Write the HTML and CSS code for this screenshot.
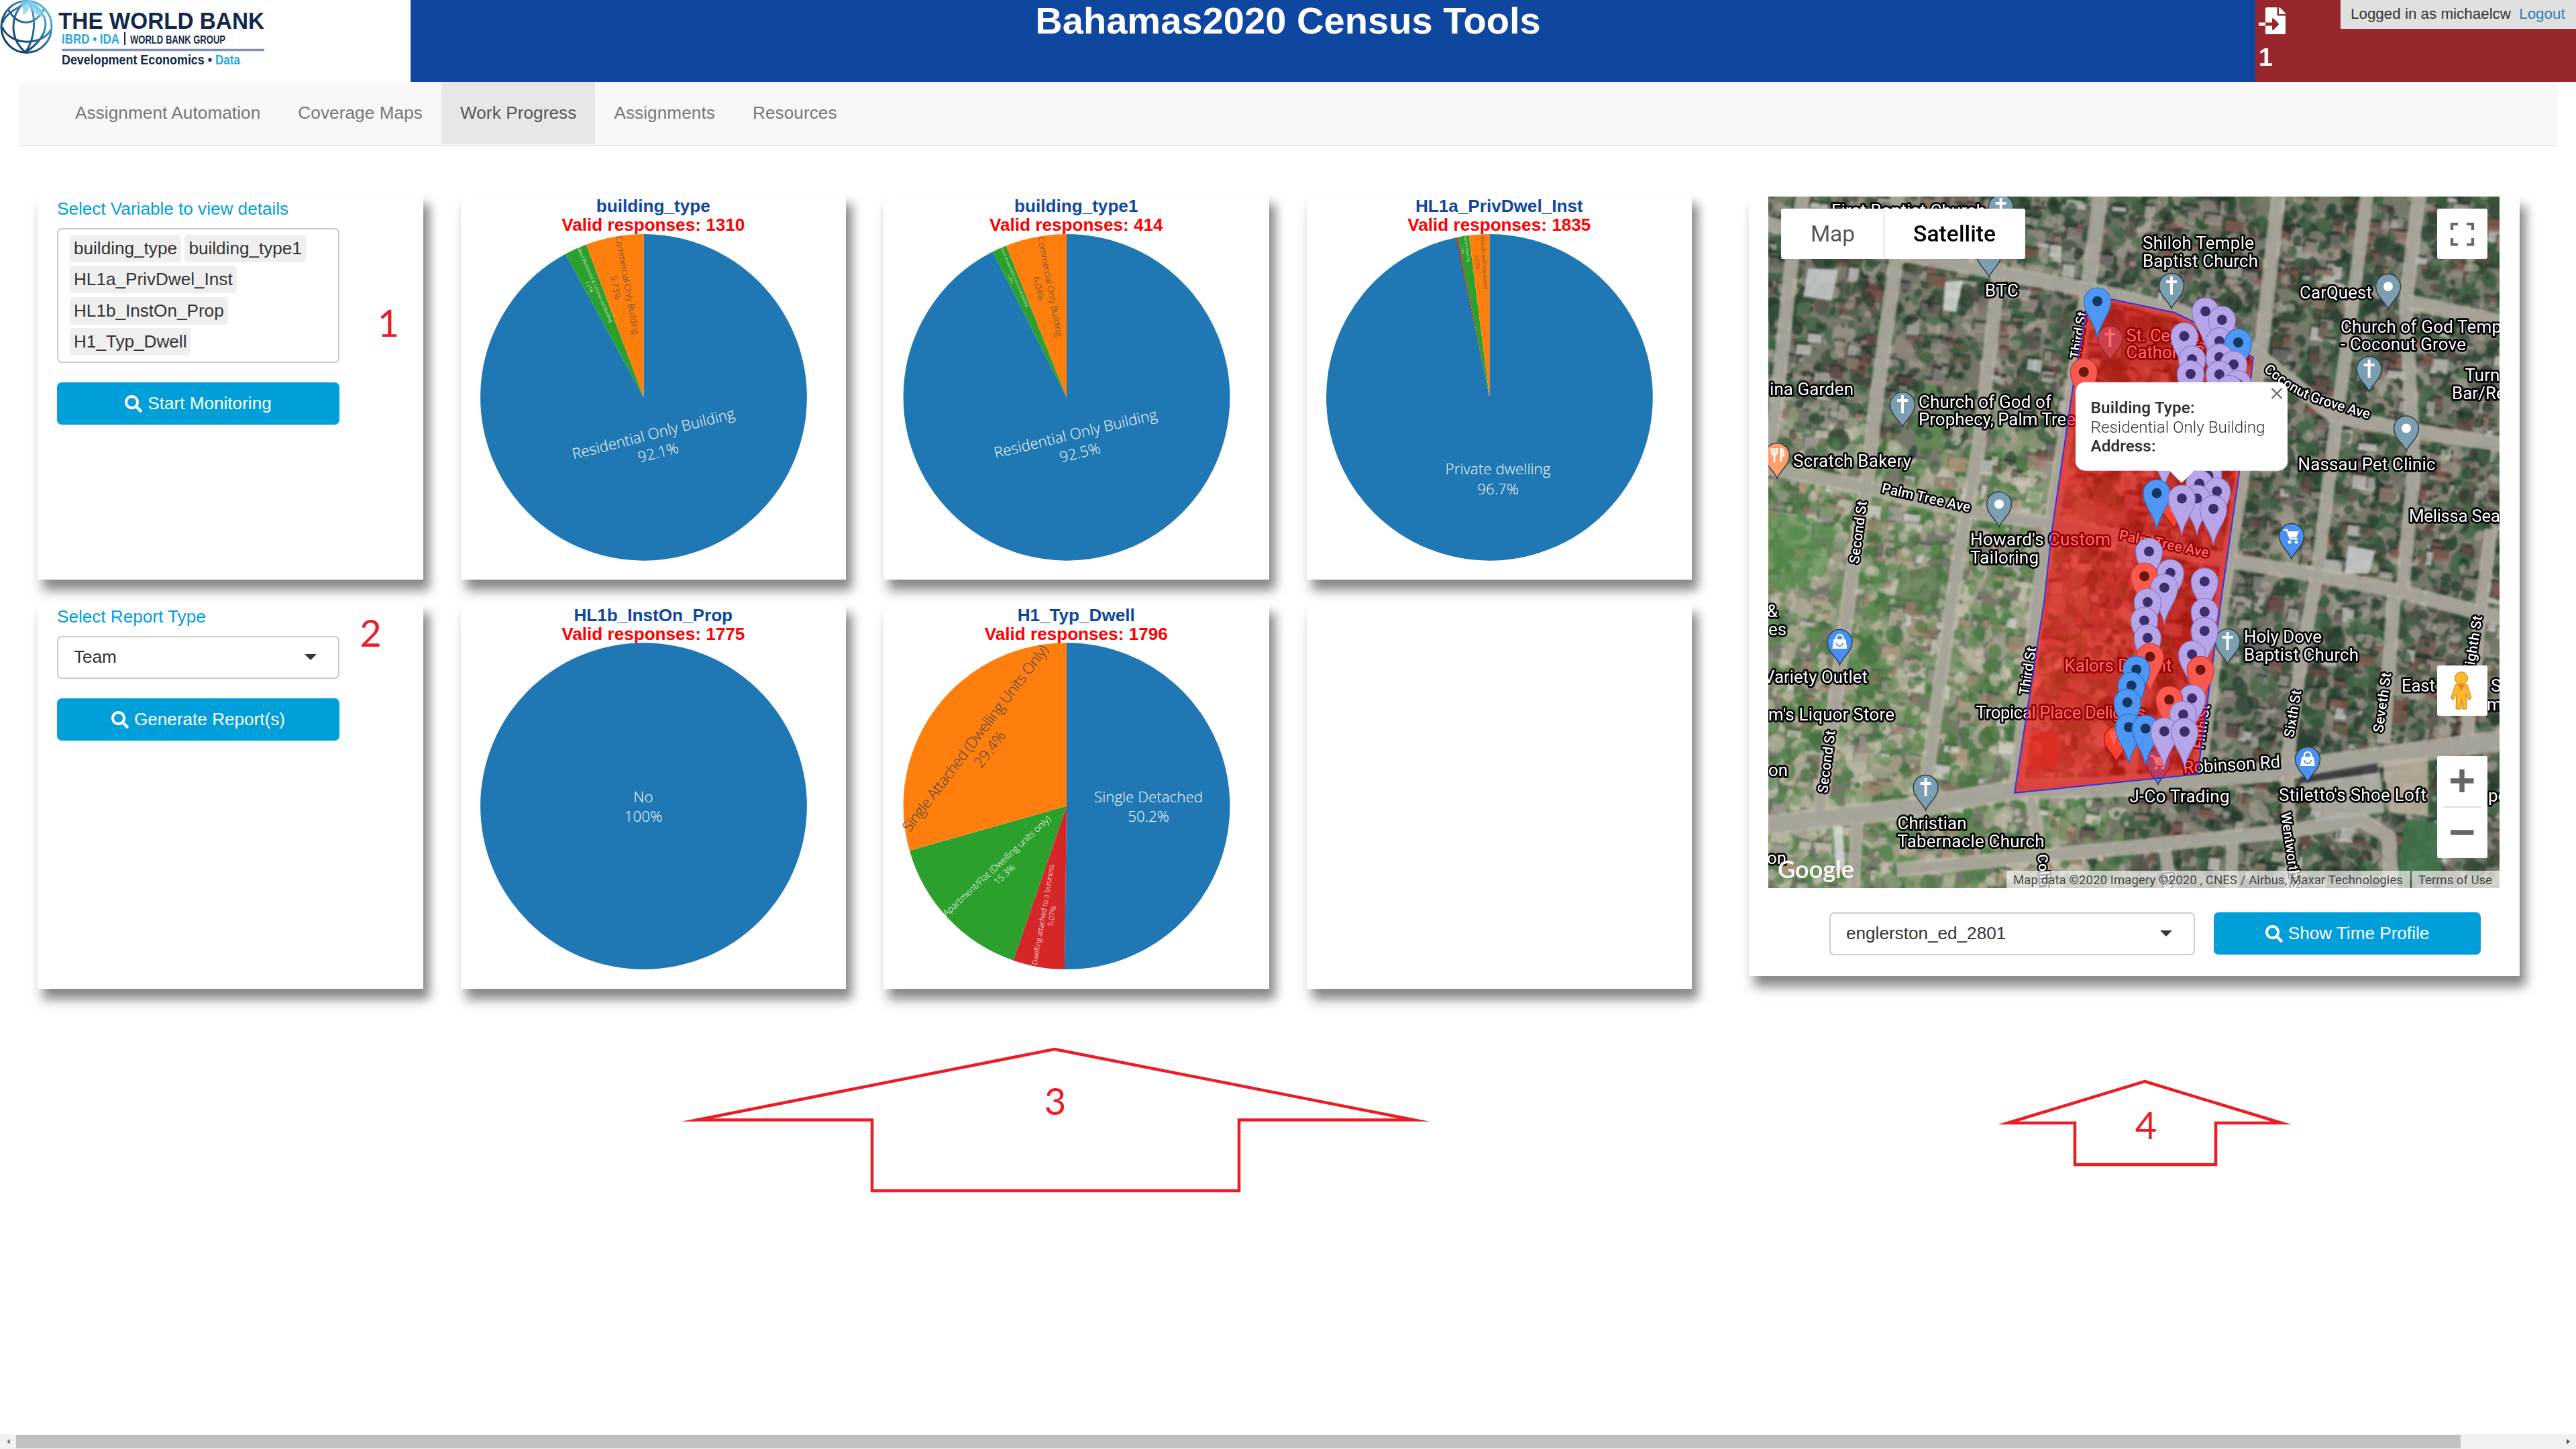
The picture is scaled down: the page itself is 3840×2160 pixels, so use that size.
FILE: index.html
```html
<!DOCTYPE html>
<html lang="en">
<head>
<meta charset="utf-8">
<title>Bahamas2020 Census Tools</title>
<link rel="stylesheet" href="styles.css">
</head>
<body>
<svg class="defs" width="0" height="0">
  <defs>
    <symbol id="search" viewBox="0 0 512 512"><path fill="#fff" d="M505 442.700L405.300 343c-4.500-4.500-10.600-7-17-7H372c27.600-35.300 44-79.700 44-128C416 93.100 322.900 0 208 0S0 93.100 0 208s93.100 208 208 208c48.300 0 92.700-16.400 128-44v16.300c0 6.400 2.500 12.500 7 17l99.700 99.700c9.400 9.400 24.600 9.400 33.900 0l28.300-28.300c9.400-9.400 9.400-24.600.1-34zM208 336c-70.700 0-128-57.200-128-128 0-70.700 57.200-128 128-128 70.700 0 128 57.200 128 128 0 70.700-57.200 128-128 128z"/></symbol>
    <g id="drop"><path class="drop" d="M0 34C-3 24-18.500 15-18.500 0A18.500 18.500 0 1 1 18.500 0C18.500 15 3 24 0 34Z"/></g>
    <g id="cross"><use href="#drop"/><path d="M0-14V13M-8-6H8" stroke="#fff" stroke-width="4" fill="none"/></g>
    <g id="dot"><use href="#drop"/><circle r="7" fill="#fff"/></g>
    <g id="cart"><use href="#drop"/><path d="M-12-9h5l5 13h11" fill="none" stroke="#fff" stroke-width="2.500"/><path d="M-7-7H11L7 2H-3z" fill="#fff"/><circle cx="-3" cy="9" r="2.500" fill="#fff"/><circle cx="7" cy="9" r="2.500" fill="#fff"/></g>
    <g id="bag"><use href="#drop"/><path d="M-9-4H9L11 10H-11z" fill="#fff"/><path d="M-5-3v-3a5 5 0 0 1 10 0v3" fill="none" stroke="#fff" stroke-width="2.500"/><path d="M-5 1a5 5 0 0 0 10 0" fill="none" stroke="#4a90f0" stroke-width="2"/></g>
    <g id="fork"><use href="#drop"/><path d="M-8-11v6a4 4 0 0 0 8 0v-6M-4-11V10M6 10V-10c3 0 4 4 4 10H6" fill="none" stroke="#fff" stroke-width="2.800"/></g>
    <g id="mark"><path class="mark" d="M0 55C-3 32-20 20-20 0A20 20 0 1 1 20 0C20 20 3 32 0 55Z"/><circle class="eye" r="7.500"/></g>
    <linearGradient id="globe" x1="0" y1="1" x2="1" y2="0"><stop offset="0" stop-color="#0b2a50"/><stop offset=".45" stop-color="#1c5f8c"/><stop offset="1" stop-color="#6cc8f2"/></linearGradient>
  </defs>
</svg>

<header class="top">
  <svg class="logo" width="612" height="122" viewBox="0 0 612 122">
    <g fill="none" stroke="url(#globe)" stroke-width="3">
      <ellipse cx="39.500" cy="40" rx="37.500" ry="38.500"/>
      <path d="M38 2C14 22 14 58 38 78M42 2C56 24 52 58 38 78M42 4C80 22 74 54 38 78M40 4C20 14 6 24 4 34M3 40C16 70 64 68 76 44M12 14C28 42 54 38 66 12"/>
    </g>
    <path d="M30 4Q42-4 54 6Q66 18 66 26Q52 24 44 10Q40 20 34 22Q36 12 30 4Z" fill="#7fd0f4" opacity=".8"/>
    <g class="brand">
      <text x="87" y="43" font-size="35" textLength="307" lengthAdjust="spacingAndGlyphs">THE WORLD BANK</text>
      <text class="sky" x="92" y="64.500" font-size="20" textLength="86" lengthAdjust="spacingAndGlyphs">IBRD • IDA</text>
      <path d="M186 48V67" stroke="#12284c" stroke-width="2"/>
      <text x="194" y="64.500" font-size="17" textLength="142" lengthAdjust="spacingAndGlyphs">WORLD BANK GROUP</text>
      <path d="M92 74.500H394" stroke="#8491ab" stroke-width="3.500"/>
      <text x="92" y="96" font-size="20" textLength="224" lengthAdjust="spacingAndGlyphs">Development Economics •</text>
      <text class="sky" x="321" y="96" font-size="20" textLength="37" lengthAdjust="spacingAndGlyphs">Data</text>
    </g>
  </svg>
  <h1>Bahamas2020 Census Tools</h1>
  <div class="status">
    <div class="pending">
      <svg width="40" height="40" viewBox="0 0 512 512"><path fill="#fff" d="M16 288c-8.800 0-16 7.200-16 16v32c0 8.800 7.200 16 16 16h112v-64zm489-183L407.100 7c-4.500-4.500-10.600-7-17-7H384v128h128v-6.100c0-6.300-2.500-12.400-7-16.900zM352 136V0H152c-13.300 0-24 10.700-24 24v264h128v-65.200c0-14.300 17.300-21.400 27.400-11.300L379 308c6.600 6.700 6.600 17.400 0 24l-95.700 96.400c-10.100 10.100-27.400 3-27.400-11.300V352H128v136c0 13.300 10.700 24 24 24h336c13.300 0 24-10.700 24-24V160H376c-13.200 0-24-10.800-24-24z"/></svg>
      <b>1</b>
    </div>
    <div class="login">Logged in as michaelcw <a>Logout</a></div>
  </div>
</header>

<nav class="nav">
  <a>Assignment Automation</a><a>Coverage Maps</a><a class="on">Work Progress</a><a>Assignments</a><a>Resources</a>
</nav>

<main class="main">
  <div class="cards">
    <section class="card form">
      <label>Select Variable to view details</label>
      <div class="tags"><span>building_type</span><span>building_type1</span><span>HL1a_PrivDwel_Inst</span><span>HL1b_InstOn_Prop</span><span>H1_Typ_Dwell</span></div>
      <button class="btn"><svg><use href="#search"/></svg>Start Monitoring</button>
    </section>

    <section class="card">
      <h2>building_type<em>Valid responses: 1310</em></h2>
      <svg class="pie" viewBox="0 0 574 574">
        <g class="slices" transform="translate(272.500 303.300) rotate(-90)">
          <circle class="blue" r="121.700" pathLength="100" stroke-dasharray="92.060 100"/>
          <circle class="green" r="121.700" pathLength="100" stroke-dasharray="2.210 100" stroke-dashoffset="-92.060"/>
          <circle class="orange" r="121.700" pathLength="100" stroke-dasharray="5.730 100" stroke-dashoffset="-94.270"/>
        </g>
        <g transform="translate(289 365) rotate(-14.300)" font-size="22.400"><text textLength="249">Residential Only Building</text><text y="29">92.1%</text></g>
        <g class="dark" transform="translate(243.500 137) rotate(79.700)" font-size="13.400"><text textLength="149">Commercial Only Building</text><text y="17.500">5.73%</text></g>
        <g transform="translate(197.500 136) rotate(66.300)" font-size="6.600"><text textLength="122">Mixed (Residential &amp; Commercial) Building</text><text y="8.600">2.21%</text></g>
      </svg>
    </section>

    <section class="card">
      <h2>building_type1<em>Valid responses: 414</em></h2>
      <svg class="pie" viewBox="0 0 574 574">
        <g class="slices" transform="translate(273 303.300) rotate(-90)">
          <circle class="blue" r="121.700" pathLength="100" stroke-dasharray="92.510 100"/>
          <circle class="green" r="121.700" pathLength="100" stroke-dasharray="1.450 100" stroke-dashoffset="-92.510"/>
          <circle class="orange" r="121.700" pathLength="100" stroke-dasharray="6.040 100" stroke-dashoffset="-93.960"/>
        </g>
        <g transform="translate(288 365) rotate(-13.500)" font-size="22.400"><text textLength="249">Residential Only Building</text><text y="29">92.5%</text></g>
        <g class="dark" transform="translate(244 139.400) rotate(79.200)" font-size="13.600"><text textLength="151">Commercial Only Building</text><text y="17.700">6.04%</text></g>
        <g transform="translate(193.500 124.800) rotate(66.400)" font-size="5.200"><text textLength="96">Mixed (Residential &amp; Commercial) Building</text><text y="6.800">1.45%</text></g>
      </svg>
    </section>

    <section class="card">
      <h2>HL1a_PrivDwel_Inst<em>Valid responses: 1835</em></h2>
      <svg class="pie" viewBox="0 0 574 574">
        <g class="slices" transform="translate(272.400 303.300) rotate(-90)">
          <circle class="blue" r="121.700" pathLength="100" stroke-dasharray="96.730 100"/>
          <circle class="red" r="121.700" pathLength="100" stroke-dasharray=".150 100" stroke-dashoffset="-96.700"/>
          <circle class="green" r="121.700" pathLength="100" stroke-dasharray="1.140 100" stroke-dashoffset="-96.840"/>
          <circle class="orange" r="121.700" pathLength="100" stroke-dasharray="2.020 100" stroke-dashoffset="-97.980"/>
        </g>
        <g transform="translate(285 418)" font-size="22.400"><text textLength="157">Private dwelling</text><text y="29.500">96.7%</text></g>
        <g class="dark" transform="translate(261.500 101.600) rotate(86.400)" font-size="8"><text textLength="81">Abandoned/Dilapidated</text><text y="10">2.02%</text></g>
        <g transform="translate(237 81.800) rotate(82.600)" font-size="5.400"><text textLength="39">Vacant dwelling</text><text y="7">1.14%</text></g>
      </svg>
    </section>

    <section class="card form second">
      <label>Select Report Type</label>
      <div class="select">Team</div>
      <button class="btn"><svg><use href="#search"/></svg>Generate Report(s)</button>
    </section>

    <section class="card">
      <h2>HL1b_InstOn_Prop<em>Valid responses: 1775</em></h2>
      <svg class="pie" viewBox="0 0 574 574">
        <circle cx="272.500" cy="302.600" r="243.400" fill="#1f77b4"/>
        <g transform="translate(272 297)" font-size="22.400"><text>No</text><text y="29">100%</text></g>
      </svg>
    </section>

    <section class="card">
      <h2>H1_Typ_Dwell<em>Valid responses: 1796</em></h2>
      <svg class="pie" viewBox="0 0 574 574">
        <g class="slices" transform="translate(273 302.600) rotate(-90)">
          <circle class="blue" r="121.700" pathLength="100" stroke-dasharray="50.200 100"/>
          <circle class="red" r="121.700" pathLength="100" stroke-dasharray="5.100 100" stroke-dashoffset="-50.200"/>
          <circle class="green" r="121.700" pathLength="100" stroke-dasharray="15.300 100" stroke-dashoffset="-55.300"/>
          <circle class="orange" r="121.700" pathLength="100" stroke-dasharray="29.400 100" stroke-dashoffset="-70.600"/>
        </g>
        <g transform="translate(395 297)" font-size="22.400"><text textLength="162">Single Detached</text><text y="29">50.2%</text></g>
        <g class="dark" transform="translate(143 206) rotate(-52.700)" font-size="22.400"><text textLength="343">Single Attached (Dwelling Units Only)</text><text y="27">29.4%</text></g>
        <g transform="translate(172 395.500) rotate(-42.800)" font-size="13.700"><text textLength="213">Apartment/Flat (Dwelling units only)</text><text y="17">15.3%</text></g>
        <g transform="translate(241.500 465) rotate(-80.300)" font-size="11"><text textLength="152">Dwelling attached to a business</text><text y="13.500">5.07%</text></g>
      </svg>
    </section>

    <section class="card"></section>
  </div>

  <section class="card mapcard">
    <div class="map">
      <canvas id="ground" width="1090" height="1031"></canvas>
      <svg class="layer" width="1090" height="1031" viewBox="0 0 1090 1031">
        <g class="poi">
          <use href="#cross" x="346.700" y="16"/><use href="#dot" x="329" y="86"/><use href="#cross" x="200" y="310"/>
          <use href="#fork" x="13" y="386" class="food"/><use href="#dot" x="344" y="458.500"/><use href="#cross" x="509.400" y="211"/>
          <use href="#cross" x="601" y="133"/><use href="#dot" x="924" y="134"/><use href="#cross" x="895.600" y="257"/><use href="#dot" x="951" y="345.600"/>
          <use href="#cart" x="780" y="506" class="shop"/><use href="#bag" x="106.400" y="664" class="shop"/><use href="#cross" x="234.600" y="881"/>
          <use href="#cross" x="684.600" y="663"/><use href="#bag" x="804" y="839" class="shop"/><use href="#cart" x="581" y="842.500" class="shop"/>
          <use href="#fork" x="519" y="808" class="food"/><use href="#fork" x="604.600" y="461" class="food"/>
        </g>
        <g class="names">
          <text x="94" y="30" textLength="230">First Baptist Church</text>
          <text x="323" y="148.500" textLength="50">BTC</text>
          <text x="558" y="78" textLength="166">Shiloh Temple</text><text x="558" y="105" textLength="172">Baptist Church</text>
          <text x="792" y="151.500" textLength="108">CarQuest</text>
          <text x="853" y="203" textLength="240">Church of God Temp</text><text x="853" y="229" textLength="187">- Coconut Grove</text>
          <text x="1038.500" y="275">Turn</text><text x="1019" y="301.500">Bar/Re</text>
          <text x="789.500" y="408" textLength="205">Nassau Pet Clinic</text><text x="955" y="485" textLength="136">Melissa Sea</text>
          <text x="2" y="296" textLength="125">ina Garden</text>
          <text x="224" y="314.600" textLength="198">Church of God of</text><text x="224" y="341" textLength="234">Prophecy, Palm Tree</text>
          <text x="37" y="402.600" textLength="176">Scratch Bakery</text>
          <text x="301" y="520" textLength="209">Howard's Custom</text><text x="301" y="547" textLength="102">Tailoring</text>
          <text x="-2" y="627">&amp;</text><text x="0" y="654">es</text>
          <text x="-7" y="725.400" textLength="155">Variety Outlet</text><text x="0" y="780.500" textLength="188">m's Liquor Store</text>
          <text x="0" y="864">on</text><text x="-2" y="995">on</text>
          <text x="309.600" y="778.400" textLength="253">Tropical Place Delights</text><text x="441.600" y="708" textLength="160">Kalors Delight</text>
          <text x="192.500" y="942.500" textLength="103">Christian</text><text x="192.500" y="970" textLength="219">Tabernacle Church</text>
          <text x="538.500" y="902.500" textLength="149">J-Co Trading</text>
          <text transform="translate(619 860) rotate(-3.500)" textLength="145">Robinson Rd</text>
          <text x="761" y="901" textLength="220">Stiletto's Shoe Loft</text>
          <text x="709" y="665" textLength="116">Holy Dove</text><text x="709" y="691.500" textLength="171">Baptist Church</text>
          <text x="533.600" y="215.500" textLength="125">St. Cecilia's</text><text x="533.600" y="241" textLength="182">Catholic Church</text>
          <text x="944" y="738" textLength="50">East</text><text x="1077" y="738">S</text><text x="1071" y="766">ma</text><text x="1073" y="902">pe</text>
        </g>
        <g class="streets">
          <path id="cga" d="M738 259Q780 296 820 309T900 333" fill="none" stroke="none"/>
          <text><textPath href="#cga" textLength="175">Coconut Grove Ave</textPath></text>
          <text transform="translate(168 441) rotate(12.600)" textLength="135">Palm Tree Ave</text>
          <text transform="translate(135 548) rotate(-82.700)" textLength="94">Second St</text>
          <text transform="translate(464 243) rotate(-81)" textLength="71">Third St</text>
          <text transform="translate(388 744) rotate(-81)" textLength="72">Third St</text>
          <text transform="translate(522 511) rotate(11.500)" textLength="136">Palm Tree Ave</text>
          <text transform="translate(88 890) rotate(-82.700)" textLength="94">Second St</text>
          <text transform="translate(401 981) rotate(84)">Collins Ave</text>
          <text transform="translate(783 807) rotate(-80.500)" textLength="71">Sixth St</text>
          <text transform="translate(916 800) rotate(-82)" textLength="90">Seveth St</text>
          <text transform="translate(1051 711) rotate(-81)" textLength="86">Eighth St</text>
          <text transform="translate(649 824) rotate(-82)" textLength="66">Fifth St</text>
          <text transform="translate(764 919) rotate(82)" textLength="122">Wentworth St</text>
          <text transform="translate(588 1009) rotate(84)">Ea</text>
        </g>
        <path class="zone" d="M478 146L507 152L606 173L649 194L723 240L702 412L677 587L640 861L514 874L367 889L411 604L423 496L455 278Z"/>
        <g class="marks">
          <use href="#mark" x="490.600" y="156" class="b"/><use href="#mark" x="651.600" y="171"/><use href="#mark" x="676.400" y="183.700"/>
          <use href="#mark" x="620" y="208"/><use href="#mark" x="672.400" y="215.500"/><use href="#mark" x="700.500" y="217.400" class="b"/>
          <use href="#mark" x="672.400" y="239.600"/><use href="#mark" x="631.600" y="242.600"/><use href="#mark" x="693.600" y="250.300"/>
          <use href="#mark" x="470.300" y="261.400" class="r"/><use href="#mark" x="629.500" y="264.500"/><use href="#mark" x="672.400" y="265"/>
          <use href="#mark" x="699.700" y="279"/><use href="#mark" x="687.500" y="286.600"/>
          <use href="#mark" x="590" y="380"/><use href="#mark" x="660" y="385"/><use href="#mark" x="656" y="416"/><use href="#mark" x="642.600" y="428"/>
          <use href="#mark" x="668.700" y="439.400"/><use href="#mark" x="579" y="442" class="b"/><use href="#mark" x="639" y="450"/><use href="#mark" x="616.400" y="450"/>
          <use href="#mark" x="663.400" y="465.400"/><use href="#mark" x="567.500" y="529"/><use href="#mark" x="599.300" y="561"/><use href="#mark" x="560.500" y="566" class="r"/>
          <use href="#mark" x="650.300" y="573.700"/><use href="#mark" x="590.300" y="583"/><use href="#mark" x="565.400" y="604.500"/><use href="#mark" x="650.300" y="619"/>
          <use href="#mark" x="560.500" y="632"/><use href="#mark" x="650.300" y="647.400"/><use href="#mark" x="565.400" y="658"/><use href="#mark" x="631.600" y="682.500"/>
          <use href="#mark" x="569" y="686" class="r"/><use href="#mark" x="548.700" y="705" class="b"/><use href="#mark" x="644.200" y="705.400" class="r"/>
          <use href="#mark" x="541.300" y="729" class="b"/><use href="#mark" x="631.600" y="748"/><use href="#mark" x="597.700" y="750" class="r"/>
          <use href="#mark" x="535.200" y="754" class="b"/><use href="#mark" x="618.500" y="772"/><use href="#mark" x="537.300" y="791" class="b"/>
          <use href="#mark" x="562.200" y="793" class="b"/><use href="#mark" x="590.300" y="797"/><use href="#mark" x="620.500" y="797.600"/>
        </g>
        <g class="popup">
          <path d="M472 276.700H760a14 14 0 0 1 14 14V394.700a14 14 0 0 1-14 14H635L616 427L598 408.700H472a14 14 0 0 1-14-14V290.700a14 14 0 0 1 14-14Z" fill="#fff"/>
          <text x="480.500" y="322.600" class="strong" textLength="155">Building Type:</text>
          <text x="480.500" y="351.700" textLength="260">Residential Only Building</text>
          <text x="480.500" y="380.400" class="strong" textLength="97">Address:</text>
          <path d="M750.500 286l15 15m0-15l-15 15" stroke="#666" stroke-width="2.200"/>
        </g>
        <g class="controls">
          <rect x="19" y="18" width="364" height="75" rx="3"/><path d="M172.500 18V93" stroke="#e6e6e6" stroke-width="2"/>
          <text x="63" y="66.600" fill="#565656" textLength="66">Map</text><text x="216" y="66.600" class="strong" textLength="123">Satellite</text>
          <rect x="997" y="18" width="75" height="75" rx="3"/>
          <path d="M1019 50V41H1028M1041 41H1050V50M1050 62V71.500H1041M1028 71.500H1019V62" fill="none" stroke="#666" stroke-width="4.200"/>
          <rect x="997" y="699" width="75" height="75" rx="3"/>
          <g fill="#fbb929" stroke="#b9812a" stroke-width="1"><path d="M1024 728Q1033 724 1042 728L1048 748L1044 750L1040 741L1041 764H1034.500L1033.500 749L1032 764H1025L1026 741L1021 750L1017.500 748Z"/><circle cx="1033" cy="718" r="9.500"/></g>
          <path d="M1028 728H1038L1033 737Z" fill="#e8802c"/>
          <rect x="997" y="834" width="75" height="152" rx="3"/>
          <path d="M1006 910H1062" stroke="#e0e0e0" stroke-width="2"/>
          <path d="M1017 871H1051.500M1034 854V888M1017 948H1051.500" stroke="#666" stroke-width="7.500"/>
        </g>
        <text class="google" x="14" y="1016" textLength="114" lengthAdjust="spacingAndGlyphs">Google</text>
        <g class="legal">
          <path d="M355 1005H957V1031H355ZM959 1005H1090V1031H959Z" fill="#f5f5f5" opacity=".7"/>
          <text x="365" y="1025" textLength="581">Map data ©2020 Imagery ©2020 , CNES / Airbus, Maxar Technologies</text><text x="969" y="1025" textLength="110">Terms of Use</text>
        </g>
      </svg>
    </div>
    <div class="mapbar">
      <div class="select">englerston_ed_2801</div>
      <button class="btn"><svg><use href="#search"/></svg>Show Time Profile</button>
    </div>
  </section>
</main>

<svg class="notes" width="3840" height="2160" viewBox="0 0 3840 2160">
  <path d="M1572 1564L2108 1669.500H1847V1775H1300V1669.500H1039ZM3197 1612L3401 1674H3303V1736H3093V1674H2993Z"/>
  <text x="579" y="502">1</text><text x="552.500" y="964">2</text><text x="1573" y="1662">3</text><text x="3199" y="1698">4</text>
</svg>

<div class="scroll"><i></i><span></span><i class="r"></i></div>
<script src="ground.js"></script>
</body>
</html>
```
FILE: styles.css
```css
* { box-sizing: border-box; }
body { margin: 0; width: 3840px; height: 2160px; overflow: hidden; position: relative; background: #fff; color: #333; font: 26.130px/37.300px "Liberation Sans", Arial, sans-serif; display: flex; flex-direction: column; }
.defs { position: absolute; }
.top { display: flex; height: 122px; flex: none; background: #0f47a0; }
.logo { background: #fff; flex: none; }
.brand { font-weight: bold; fill: #12284c; }
.brand .sky { fill: #2ca6df; }
.top h1 { margin: 0; width: 2616px; flex: none; text-align: center; color: #fff; font-size: 56px; line-height: 61.600px; letter-spacing: .06px; }
.status { flex: 1; margin-left: 134px; display: flex; justify-content: space-between; align-items: flex-start; background: #98262c; }
.pending { display: flex; flex-direction: column; padding: 11px 0 0 5px; color: #fff; font-size: 37.300px; line-height: 40px; }
.pending svg { margin-bottom: 14px; }
.login { width: 351px; height: 43px; padding-left: 15px; background: #e0e0e0; font-size: 22.400px; line-height: 42px; white-space: nowrap; }
.login a { color: #337ab7; margin-left: 6px; }
.nav { flex: none; display: flex; height: 96px; margin: 0 28px; padding-left: 56px; background: #f8f8f8; border-bottom: 2px solid #e7e7e7; }
.nav a { height: 93px; padding: 0 28px; line-height: 92px; color: #777; letter-spacing: .09px; }
.nav .on { background: #e7e7e7; color: #555; }
.main { display: flex; gap: 85px; align-items: flex-start; padding: 71px 0 0 56px; }
.cards { display: grid; grid-template-columns: repeat(4, 574.500px); grid-template-rows: 575px 575px; gap: 35px 56px; }
.card { background: #fff; display: grid; box-shadow: 9px 15px 15px #888, 0 20px 22px rgba(0, 0, 0, .07); }
.card h2 { grid-area: 1 / 1; z-index: 1; margin: 0; padding-top: 4px; text-align: center; color: #0f47a0; font-size: 26.130px; line-height: 28px; }
.card h2 em { display: block; font-style: normal; color: #f00; }
.pie { grid-area: 1 / 1; width: 574px; height: 574px; }
.pie text { text-anchor: middle; font-family: "Open Sans", sans-serif; font-weight: 300; fill: #fff; }
.pie .dark text { fill: #444; }
.slices circle { fill: none; stroke-width: 243.400px; }
.blue { stroke: #1f77b4; }
.green { stroke: #2ca02c; }
.orange { stroke: #ff7f0e; }
.red { stroke: #d62728; }
.form { display: flex; flex-direction: column; padding: 1px 125px 0 29px; }
.form label { color: #009fda; line-height: 37px; height: 50px; padding-top: 3px; }
.second { padding-top: 0; }
.second label { padding-top: 2px; }
.form .select { margin-top: -1px; }
.form .tags { width: 421px; height: 201px; border: 2px solid #ccc; border-radius: 7px; padding: 8px 17px; display: flex; flex-wrap: wrap; align-content: flex-start; gap: 5.400px; }
.tags span { background: #efefef; border-radius: 5px; padding: 0 6px; line-height: 41px; height: 41px; }
.btn { width: 421px; height: 63px; margin-top: 29px; border: 0; border-radius: 7px; padding: 0; display: flex; align-items: center; justify-content: center; gap: 8px; background: #009fda; color: #fff; font: inherit; }
.btn svg { width: 26px; height: 26px; }
.select { width: 421px; height: 64px; border: 2px solid #ccc; border-radius: 7px; padding: 0 32px 1px 23px; line-height: 59px; display: flex; justify-content: space-between; align-items: center; }
.select::after { content: ""; border: 9.500px solid transparent; border-top-color: #333; border-bottom: 0; }
.mapcard { width: 1149px; height: 1163px; margin-top: 3px; display: flex; flex-direction: column; padding: 1px 30px 0 29px; }
.map { position: relative; width: 1090px; height: 1031px; overflow: hidden; }
.map canvas { display: block; filter: blur(1.600px); transform: scale(1.008); }
.layer { position: absolute; left: 0; top: 0; overflow: hidden; font-family: Roboto, sans-serif; }
.drop { fill: var(--c, #7b9eb0); stroke: #2f3f48; stroke-width: 1.500px; }
.food { --c: #ff9e67; }
.shop { --c: #4a90f0; }
.names text, .streets text { fill: #fff; stroke: #000; stroke-width: 5.500px; stroke-linejoin: round; paint-order: stroke; font-size: 26px; }
.streets text { font-size: 21px; font-weight: 500; stroke-width: 5px; }
.zone { fill: #f00; fill-opacity: .58; stroke: #3a30e0; stroke-width: 2px; }
.mark { fill: var(--c, #b7a5ea); stroke: var(--s, #8a78c4); stroke-width: 1.200px; }
.eye { fill: var(--e, #3d2d6b); }
.b { --c: #4e97f5; --s: #2c6cc0; --e: #14375f; }
.r { --c: #f9594f; --s: #c93a33; --e: #6b1410; }
.popup text { font-size: 24.300px; font-weight: 300; fill: #333; }
.popup .strong { font-weight: 600; }
.controls rect { fill: #fff; }
.controls text { font-size: 33.600px; }
.controls .strong { font-weight: 500; }
.google { font: 600 36px Lato, sans-serif; fill: #fff; }
.legal text { font-size: 18.700px; fill: #444; }
.mapbar { display: flex; gap: 28px; padding: 36px 0 0 91px; }
.mapbar .select { width: 545px; }
.mapbar .btn { width: 398px; margin-top: 0; }
.notes { position: absolute; left: 0; top: 0; z-index: 2; }
.notes path { fill: none; stroke: #ed1c24; stroke-width: 4.500px; stroke-miterlimit: 20; }
.notes text { fill: #ed1c24; font: 56px Lato, sans-serif; text-anchor: middle; }
.scroll { margin-top: auto; height: 22px; flex: none; background: #f1f1f1; display: flex; align-items: center; }
.scroll span { width: 3644px; height: 20px; background: #c1c1c1; margin-right: auto; }
.scroll i { width: 24px; height: 20px; display: grid; place-items: center; }
.scroll i::after { content: ""; border: 4px solid transparent; border-right: 5px solid #808080; border-left: 0; }
.scroll .r::after { border: 4px solid transparent; border-left: 5px solid #505050; border-right: 0; }
```
FILE: ground.js
```js
// Aerial ground layer: vegetation, roofs and roads.
const canvas = document.getElementById('ground');
const ctx = canvas.getContext('2d', { willReadFrequently: true });
let seed = 7;
const rnd = () => (seed = (seed * 16807) % 2147483647) / 2147483647;
const pick = a => a[Math.floor(rnd() * a.length)];
const W = 1090, H = 1031;

ctx.fillStyle = '#76796a';
ctx.fillRect(0, 0, W, H);

// The south-west quarter is brighter than the rest; the edge is ragged.
const isLight = (x, y) => x + rnd() * 120 < 560 && y + rnd() * 140 > 420;

for (let i = 0; i < 5200; i++) {
  const x = rnd() * W, y = rnd() * H, r = 4 + rnd() * 15;
  ctx.fillStyle = isLight(x, y)
    ? pick(['#5d8a52', '#4f7d48', '#8d9a78', '#a8a68e', '#c2bea9', '#44703f', '#8a9d7c', '#b5b39d'])
    : pick(['#2a4230', '#365a3b', '#2a3f30', '#77746a', '#8c877a', '#446848', '#a09a8c', '#55534a']);
  ctx.globalAlpha = .75;
  ctx.beginPath();
  ctx.ellipse(x, y, r, r * (.5 + rnd() * .5), rnd() * 3, 0, 7);
  ctx.fill();
}
for (let i = 0; i < 1150; i++) {
  const x = rnd() * W, y = rnd() * H, w = 7 + rnd() * 22, h = 6 + rnd() * 17;
  const light = isLight(x, y);
  ctx.save();
  ctx.translate(x, y);
  ctx.rotate(.12 + (rnd() - .5) * .1);
  ctx.globalAlpha = light ? .3 : .6;
  ctx.fillStyle = '#1f2824';
  ctx.fillRect(-2, -4, w, h);
  ctx.globalAlpha = .75;
  ctx.fillStyle = light
    ? pick(['#b8ae9f', '#a98b76', '#cfcabb', '#8d7866', '#e0ded6', '#a39f94', '#b99a80'])
    : pick(['#a39a8e', '#7d6359', '#bab4aa', '#6c5049', '#d2d0ca', '#8f8a84', '#9c8474', '#8a5d52', '#77726d']);
  ctx.fillRect(0, 0, w, h);
  ctx.restore();
}
// Tree crowns over the roofs.
for (let i = 0; i < 2600; i++) {
  const x = rnd() * W, y = rnd() * H, r = 3 + rnd() * 8;
  ctx.globalAlpha = .6;
  ctx.fillStyle = isLight(x, y) ? pick(['#5a8650', '#7c9a6a', '#c9c5b2', '#456f40']) : pick(['#294530', '#33553a', '#1f3326', '#a8a396', '#4b6d4c']);
  ctx.beginPath();
  ctx.ellipse(x, y, r, r * .8, rnd() * 3, 0, 7);
  ctx.fill();
}

const roads = [
  [17, [0,44, 209,90, 469,140, 514,150, 616,175, 680,200, 734,243, 840,328, 950,350, 1090,370]],
  [15, [56,0, 40,90, 14,331, 0,400]],
  [16, [196,0, 194,94, 163,312, 151,419, 128,561, 90,853, 79,918]],
  [15, [347,102, 316,370, 285,542, 266,669, 239,861]],
  [17, [496,0, 477,140, 454,293, 423,484, 404,587, 370,885]],
  [16, [759,0, 734,224, 698,465, 677,587, 653,771, 640,861]],
  [14, [890,0, 861,217, 840,370, 816,561, 792,689, 771,845, 779,1031]],
  [15, [967,0, 947,159, 959,408, 942,587, 930,591, 914,812]],
  [14, [1073,496, 1061,591, 1036,812]],
  [17, [947,159, 1090,190]],
  [17, [0,404, 167,438, 301,469, 423,488, 514,505, 657,538, 800,561, 934,587, 1090,628]],
  [25, [0,934, 232,906, 370,881, 514,877, 759,853, 1090,808]],
  [16, [194,1000, 408,979, 538,967, 775,942, 881,926, 922,951, 926,1031]],
  [14, [393,893, 416,1031]], [13, [136,925, 130,1031]], [13, [590,965, 600,1031]], [13, [690,950, 690,1031]], [12, [566,505, 540,870]]
];
ctx.lineJoin = 'round';
for (const [extra, color, alpha] of [[6, '#bdb8aa', .75], [-3, '#a5a299', .85]]) {
  ctx.strokeStyle = color;
  ctx.globalAlpha = alpha;
  for (const [w, p] of roads) {
    ctx.lineWidth = w + extra;
    ctx.beginPath();
    for (let i = 0; i < p.length; i += 2) ctx.lineTo(p[i], p[i + 1]);
    ctx.stroke();
  }
}
// Large landmarks: car park, courts and warehouse roofs.
const area = (c, ...p) => { ctx.fillStyle = c; ctx.beginPath(); for (let i = 0; i < p.length; i += 2) ctx.lineTo(p[i], p[i + 1]); ctx.fill(); };
area('#b3b3ab', 790,870, 910,856, 915,915, 815,928);
area('#343638', 790,862, 905,842, 905,856, 790,872);
area('#bdb2a2', 912,838, 980,832, 980,920, 925,915);
area('#3e7349', 945,925, 1000,930, 1000,1005, 935,1020);
area('#cfd2d2', 862,520, 902,528, 892,562, 856,562);
area('#c9cccf', 63,110, 108,112, 98,158, 56,152);
area('#d3dbd4', 266,130, 292,128, 282,175, 262,172);
ctx.globalAlpha = .6;
area('#538d4a', 0,470, 70,480, 105,500, 90,560, 0,590);
area('#45703e', 200,560, 262,545, 255,610, 190,600);
area('#c9624c', 393,795, 435,800, 430,850, 385,850);
ctx.globalAlpha = .85;
area('#d8dbdd', 100,935, 114,935, 118,1000, 104,1000);
```
